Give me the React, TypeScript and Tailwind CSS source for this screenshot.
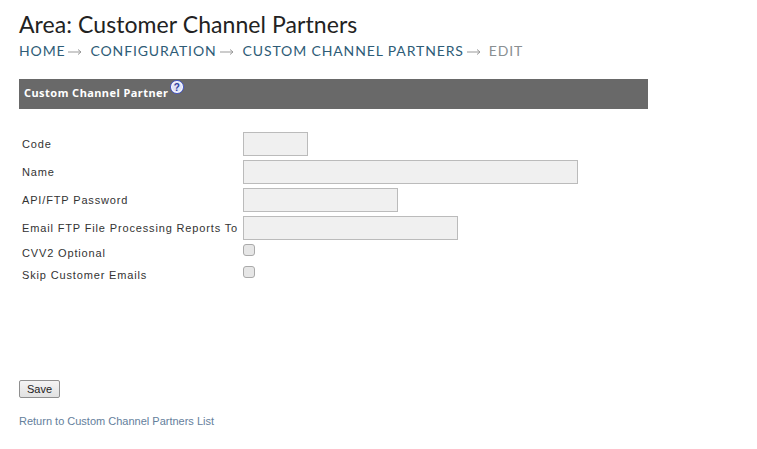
const fields = [
    { label: 'Code', width: 'w-[65px]' },
    { label: 'Name', width: 'w-[335px]' },
    { label: 'API/FTP Password', width: 'w-[155px]' },
    { label: 'Email FTP File Processing Reports To', width: 'w-[215px]' },
];

const checks = ['CVV2 Optional', 'Skip Customer Emails'];

const Arrow = () => (
    <svg width="14" height="8" viewBox="0 0 14 8" className="ml-[3px] mr-[8px] mt-[3px] text-[#999]" fill="none" stroke="currentColor">
        <path d="M0 4h13M10 1.500L13 4l-3 2.500" />
    </svg>
);

const HelpIcon = () => (
    <svg width="14" height="14" viewBox="0 0 14 14" className="self-start mt-[1px] ml-[2px]">
        <circle cx="7" cy="7" r="6.500" fill="#fff" stroke="#3f51c4" />
        <circle cx="7" cy="7" r="5" fill="#dfe3f7" />
        <text x="7" y="10.500" textAnchor="middle" fontSize="10" fontWeight="700" fill="#2f3f9f" fontFamily="'Liberation Sans', sans-serif">?</text>
    </svg>
);

const App = () => {
    return (
        <div className="w-[757px] h-[449px] overflow-hidden bg-white pl-[19px] pt-[9px] font-['Liberation_Sans',sans-serif]">
            <h1 className="text-[23px] leading-[30px] tracking-[0.07px] text-[#222] font-['Lato',sans-serif]">Area: Customer Channel Partners</h1>

            <div className="flex items-center h-[22px] text-[14px] tracking-[0.87px] uppercase text-[#2e5c77] font-['Lato',sans-serif]">
                <span>Home</span>
                <Arrow />
                <span>Configuration</span>
                <Arrow />
                <span className="ml-[1px]">Custom Channel Partners</span>
                <Arrow />
                <span className="text-[#8a8f92]">Edit</span>
            </div>

            <div className="flex items-center w-[629px] h-[30px] mt-[18px] pl-[5px] pb-[2px] bg-[#696969] text-[11px] font-bold tracking-[0.45px] text-white font-['Noto_Sans',sans-serif]">
                <span>Custom Channel Partner</span>
                <HelpIcon />
            </div>

            <div className="flex flex-col gap-[4px] mt-[23px]">
                {fields.map((f) => (
                    <div key={f.label} className="flex items-center h-[24px]">
                        <label className="w-[224px] pl-[3px] text-[11px] tracking-[0.85px] text-[#333] whitespace-nowrap">{f.label}</label>
                        <div className={`${f.width} h-[24px] border border-[#bbb] bg-[#f0f0f0]`} />
                    </div>
                ))}
            </div>

            <div className="flex flex-col gap-[10px] mt-[4px]">
                {checks.map((c) => (
                    <div key={c} className="flex h-[12px]">
                        <label className="w-[224px] pl-[3px] pt-[3px] text-[11px] leading-[13px] tracking-[0.85px] text-[#333] whitespace-nowrap">{c}</label>
                        <div className="w-[12px] h-[12px] rounded-[3px] border border-[#aaa] bg-[#e6e6e6]" />
                    </div>
                ))}
            </div>

            <button className="block mt-[102px] w-[41px] h-[18px] rounded-[2px] border border-[#8f8f8f] bg-linear-to-b from-[#f4f4f4] to-[#e2e2e2] text-[11px] leading-[16px] text-[#222]">Save</button>

            <a className="block mt-[16px] text-[11px] leading-[14px] text-[#64809c]">Return to Custom Channel Partners List</a>
        </div>
    );
};

export default App;
